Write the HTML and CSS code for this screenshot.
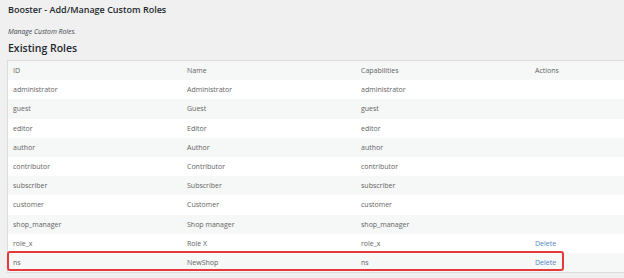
FILE: index.html
```html
<!DOCTYPE html>
<html lang="en">
<head>
    <meta charset="UTF-8">
    <meta name="viewport" content="width=device-width, initial-scale=1.0">
    <title>Booster - Add/Manage Custom Roles</title>
    <link rel="stylesheet" href="styles.css">
</head>
<body>
    <div id="page">
        <h1 class="page-title">Booster - Add/Manage Custom Roles</h1>
        <p class="page-desc">Manage Custom Roles.</p>
        <h2 class="section-title">Existing Roles</h2>

        <div class="roles-wrap">
            <table class="roles">
                <tr>
                    <td>ID</td>
                    <td>Name</td>
                    <td>Capabilities</td>
                    <td>Actions</td>
                </tr>
                <tr><td>administrator</td><td>Administrator</td><td>administrator</td><td></td></tr>
                <tr><td>guest</td><td>Guest</td><td>guest</td><td></td></tr>
                <tr><td>editor</td><td>Editor</td><td>editor</td><td></td></tr>
                <tr><td>author</td><td>Author</td><td>author</td><td></td></tr>
                <tr><td>contributor</td><td>Contributor</td><td>contributor</td><td></td></tr>
                <tr><td>subscriber</td><td>Subscriber</td><td>subscriber</td><td></td></tr>
                <tr><td>customer</td><td>Customer</td><td>customer</td><td></td></tr>
                <tr><td>shop_manager</td><td>Shop manager</td><td>shop_manager</td><td></td></tr>
                <tr><td>role_x</td><td>Role X</td><td>role_x</td><td><a href="#">Delete</a></td></tr>
                <tr><td>ns</td><td>NewShop</td><td>ns</td><td><a href="#">Delete</a></td></tr>
            </table>
            <!-- highlight drawn over the new role -->
            <div class="highlight"></div>
        </div>
    </div>
</body>
</html>
```

FILE: styles.css
```css
body, html {
    padding: 0;
    margin: 0;
}

body {
    background-color: #f0f0f1;
    font-family: "Open Sans", "Noto Sans", sans-serif;
    color: #646464;
    overflow: hidden;
    width: 624px;
    height: 278px;
}

#page {
    padding-left: 8px;
    padding-top: 3px;
}

.page-title {
    margin: 0;
    font-size: 9px;
    font-weight: 600;
    line-height: 14px;
    color: #23282d;
}

.page-desc {
    margin: 0;
    margin-top: 10px;
    font-size: 6.8px;
    font-style: italic;
    line-height: 10px;
    color: #3c434a;
}

.section-title {
    margin: 0;
    margin-top: 4px;
    font-size: 10.5px;
    font-weight: 600;
    line-height: 14px;
    color: #23282d;
}

.roles-wrap {
    position: relative;
    margin-top: 5px;
    margin-left: -1px;
}

.roles {
    border-collapse: collapse;
    width: 696px;
    table-layout: fixed;
    background-color: #fff;
    border: 1px solid #dcdcde;
    font-size: 7px;
}

.roles td {
    height: 19.2px;
    padding: 0 0 0 5px;
    vertical-align: middle;
    width: 169px;
}

.roles tr:nth-child(odd) {
    background-color: #f6f7f7;
}

.roles a {
    color: #4f87c4;
    text-decoration: none;
}

.highlight {
    position: absolute;
    left: 0;
    top: 191px;
    width: 553px;
    height: 16px;
    border: 2px solid #e5383b;
    border-radius: 3px;
}
```
